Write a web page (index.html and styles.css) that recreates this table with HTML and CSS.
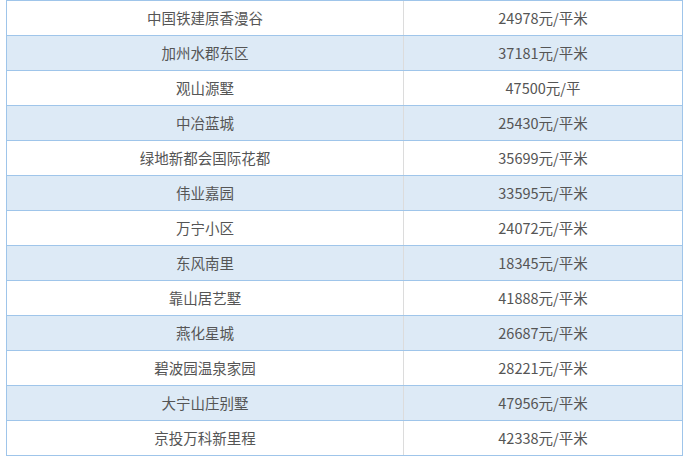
FILE: index.html
```html
<!DOCTYPE html>
<html lang="zh-CN">
<head>
<meta charset="utf-8">
<title>楼盘价格</title>
<link rel="stylesheet" href="styles.css">
</head>
<body>
<div class="price-table">
  <div class="row"><div class="name">中国铁建原香漫谷</div><div class="price">24978元/平米</div></div>
  <div class="row alt"><div class="name">加州水郡东区</div><div class="price">37181元/平米</div></div>
  <div class="row"><div class="name">观山源墅</div><div class="price">47500元/平</div></div>
  <div class="row alt"><div class="name">中冶蓝城</div><div class="price">25430元/平米</div></div>
  <div class="row"><div class="name">绿地新都会国际花都</div><div class="price">35699元/平米</div></div>
  <div class="row alt"><div class="name">伟业嘉园</div><div class="price">33595元/平米</div></div>
  <div class="row"><div class="name">万宁小区</div><div class="price">24072元/平米</div></div>
  <div class="row alt"><div class="name">东风南里</div><div class="price">18345元/平米</div></div>
  <div class="row"><div class="name">靠山居艺墅</div><div class="price">41888元/平米</div></div>
  <div class="row alt"><div class="name">燕化星城</div><div class="price">26687元/平米</div></div>
  <div class="row"><div class="name">碧波园温泉家园</div><div class="price">28221元/平米</div></div>
  <div class="row alt"><div class="name">大宁山庄别墅</div><div class="price">47956元/平米</div></div>
  <div class="row"><div class="name">京投万科新里程</div><div class="price">42338元/平米</div></div>
</div>
</body>
</html>
```

FILE: styles.css
```css
html, body {
  margin: 0;
  padding: 0;
  background: #ffffff;
}

body {
  font-family: "Noto Sans CJK SC", "Noto Sans", sans-serif;
  font-size: 14.5px;
  color: #555555;
}

.price-table {
  margin-left: 6px;
  width: 675px;
  border-left: 1px solid #9fc5ea;
  border-right: 1px solid #9fc5ea;
  border-top: 1px solid #9fc5ea;
}

.row {
  display: flex;
  height: 34px;
  border-bottom: 1px solid #9fc5ea;
  background: #ffffff;
}

.row.alt {
  background: #ddeaf6;
}

.name,
.price {
  display: flex;
  align-items: center;
  justify-content: center;
  line-height: 1;
}

.name {
  width: 396px;
  border-right: 1px solid #dcdcdc;
}

.price {
  width: 278px;
}
```
